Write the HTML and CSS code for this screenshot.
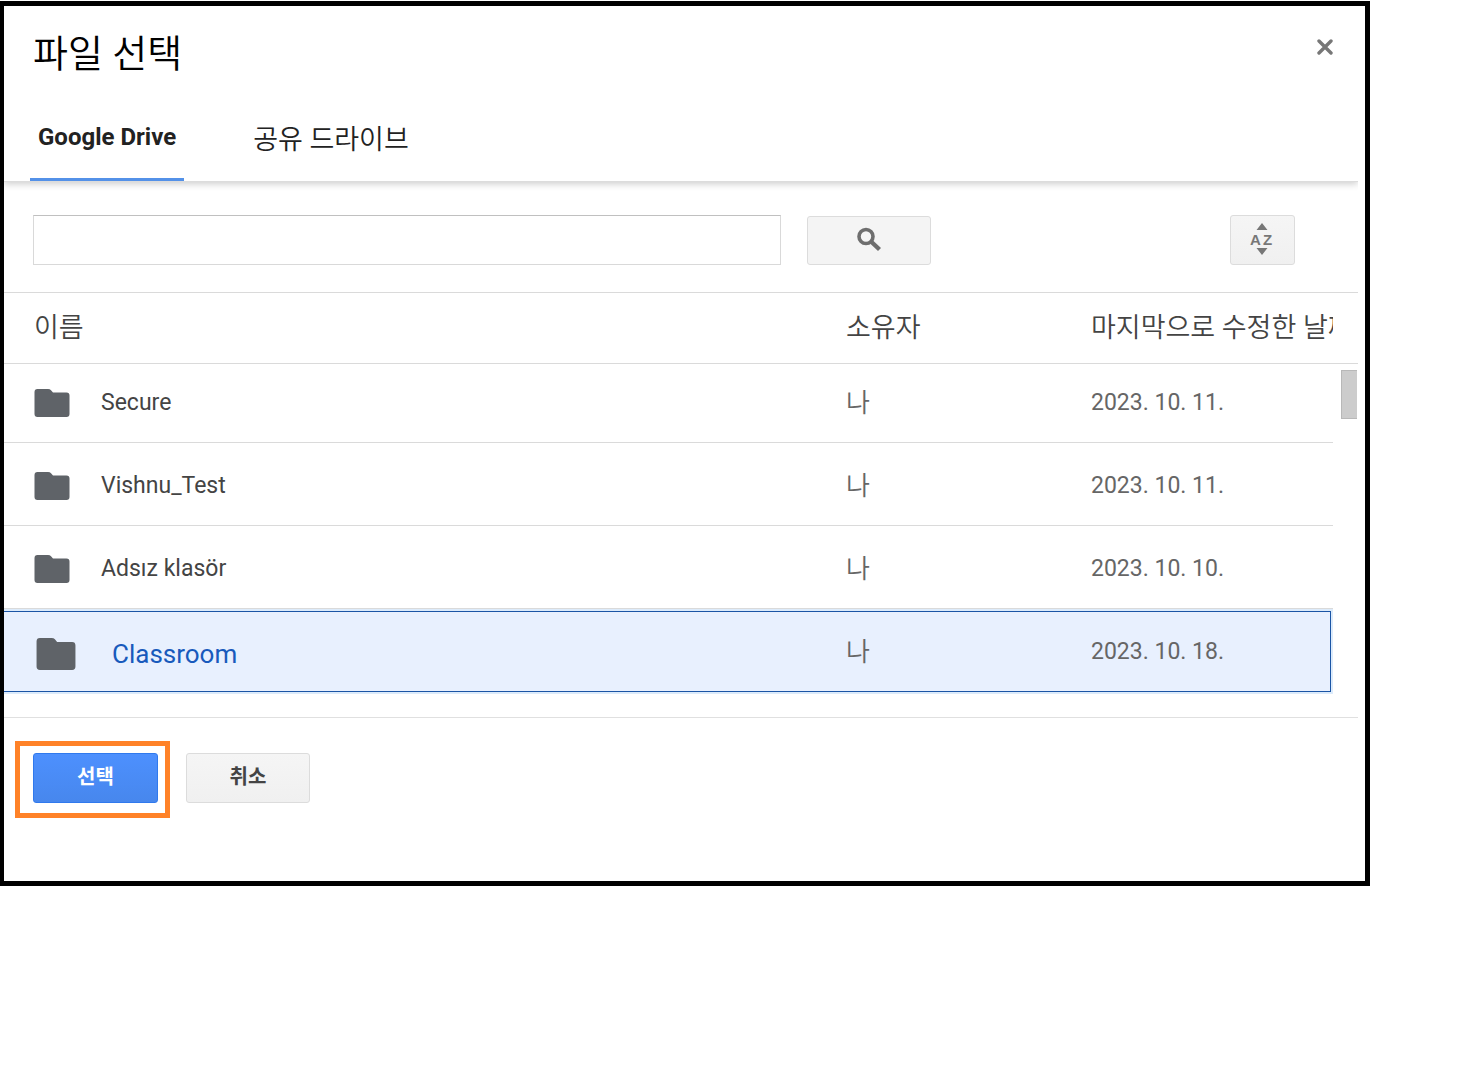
FILE: index.html
```html
<!DOCTYPE html>
<html lang="ko">
<head>
<meta charset="utf-8">
<title>파일 선택</title>
<link rel="stylesheet" href="styles.css">
</head>
<body>
<svg class="defs" aria-hidden="true">
  <symbol id="folder" viewBox="0 0 36 28" preserveAspectRatio="none">
    <path d="M3.500 0H14Q16 0 17 1.200L19 3.500H32.500Q35.500 3.500 35.500 6.500V25Q35.500 28 32.500 28H3.500Q0.500 28 0.500 25V3Q0.500 0 3.500 0Z" fill="#5f6368"/>
  </symbol>
</svg>
<main class="dialog">
  <header class="dialog-header">
    <h1 class="title">파일 선택</h1>
    <button class="close" type="button" aria-label="닫기">
      <svg width="16" height="16" viewBox="0 0 16 16"><path d="M2 2L14 14M14 2L2 14" stroke="#777" stroke-width="3.400" stroke-linecap="round"/></svg>
    </button>
  </header>
  <nav class="tabs">
    <a class="tab tab-active" href="#drive">Google Drive</a>
    <a class="tab" href="#shared">공유 드라이브</a>
  </nav>
  <form class="toolbar">
    <input class="search-input" type="text" aria-label="검색">
    <button class="button search-button" type="button" aria-label="검색">
      <svg width="26" height="26" viewBox="0 0 26 26" fill="none" stroke="#6e6e6e"><circle cx="10" cy="9.500" r="7" stroke-width="3.600"/><path d="M15 14.500L23.500 22.500" stroke-width="4.400"/></svg>
    </button>
    <button class="button sort-button" type="button" aria-label="정렬">
      <svg width="28" height="34" viewBox="0 0 28 34" fill="#777"><path d="M13 2L18.500 9H7.500ZM13 34L18.500 27H7.500Z"/><text class="sort-text" x="1" y="24">A</text><text class="sort-text" x="14" y="24">Z</text></svg>
    </button>
  </form>
  <section class="listing">
    <table class="files">
      <colgroup><col><col class="col-owner"><col class="col-date"><col class="col-scroll"></colgroup>
      <thead>
        <tr><th>이름</th><th>소유자</th><th>마지막으로 수정한 날짜</th><td></td></tr>
      </thead>
      <tbody>
        <tr class="first"><td><div class="name"><svg class="folder"><use href="#folder"/></svg>Secure</div></td><td>나</td><td>2023. 10. 11.</td></tr>
        <tr><td><div class="name"><svg class="folder"><use href="#folder"/></svg>Vishnu_Test</div></td><td>나</td><td>2023. 10. 11.</td></tr>
        <tr><td><div class="name"><svg class="folder"><use href="#folder"/></svg>Adsız klasör</div></td><td>나</td><td>2023. 10. 10.</td></tr>
        <tr class="selected"><td><div class="name"><svg class="folder"><use href="#folder"/></svg>Classroom</div></td><td>나</td><td>2023. 10. 18.</td></tr>
      </tbody>
    </table>
    <div class="scroll-thumb"></div>
  </section>
  <footer class="actions">
    <div class="highlight"><button class="button button-primary" type="button">선택</button></div>
    <button class="button button-cancel" type="button">취소</button>
  </footer>
</main>
</body>
</html>
```
FILE: styles.css
```css
* { box-sizing: border-box; }
body {
  margin: 0;
  padding: 1px 110px 0 0;
  background: #fff;
  color: #444;
  font: 23px/32px Roboto, "Noto Sans CJK KR", sans-serif;
}
.defs { position: absolute; width: 0; height: 0; }
.dialog {
  border: 5px solid #000;
  border-left-width: 4px;
  padding: 0 7px 63px 0;
}
.dialog-header {
  display: flex;
  justify-content: space-between;
  align-items: flex-start;
  padding: 20px 25px 0 29px;
}
.title {
  margin: 0;
  color: #000;
  font-size: 38px;
  font-weight: 350;
  line-height: 56px;
}
.close {
  display: flex;
  margin-top: 13px;
  padding: 0;
  border: 0;
  background: none;
}
.tabs {
  display: flex;
  gap: 61px;
  height: 99px;
  padding-left: 26px;
  box-shadow: 0 1px 0 #dcdcdc, 0 3px 7px rgba(0, 0, 0, 0.2);
  clip-path: inset(0 0 -12px 0);
}
.tab {
  padding: 42px 8px 0;
  color: #222;
  font-size: 27px;
  font-weight: 350;
  text-decoration: none;
}
.tab-active {
  padding-top: 39px;
  border-bottom: 3px solid #5391e8;
  font-size: 24px;
  font-weight: 700;
}
.toolbar {
  display: flex;
  align-items: center;
  padding: 34px 63px 27px 29px;
}
.search-input {
  flex: 0 1 748px;
  min-width: 0;
  height: 50px;
  border: 1px solid #d9d9d9;
  border-top-color: #c0c0c0;
  padding: 0 12px;
  font: inherit;
}
.button {
  display: flex;
  justify-content: center;
  align-items: center;
  width: 124px;
  height: 50px;
  padding: 0 0 4px;
  border: 1px solid #dcdcdc;
  border-radius: 3px;
  background: linear-gradient(#f5f5f5, #f0f0f0);
  color: #444;
  font: 700 20px/32px "Noto Sans CJK KR", sans-serif;
}
.search-button {
  height: 49px;
  margin: 1px 0 0 26px;
  padding: 0 0 1px;
  background: #f4f4f4;
}
.sort-button { width: 65px; margin-left: auto; }
.sort-text { font: 700 15px "Liberation Sans", sans-serif; }
.listing { position: relative; padding-bottom: 23px; }
.files {
  width: 100%;
  border-collapse: separate;
  border-spacing: 0;
  table-layout: fixed;
}
.col-owner { width: 245px; }
.col-date { width: 242px; }
.col-scroll { width: 25px; }
.files th,
.files td {
  padding: 0;
  border-bottom: 1px solid #dadada;
  text-align: left;
  white-space: nowrap;
}
.files thead th,
.files thead td {
  height: 72px;
  border-top: 1px solid #dadada;
  overflow: hidden;
  font-size: 27px;
  font-weight: 350;
}
.files th:first-child,
.files td:first-child { padding-left: 30px; }
.files tbody td { height: 83px; padding-top: 3px; color: #666; }
.files tbody .first td { height: 79px; padding-top: 0; }
.files tbody td:nth-child(2) { font-size: 26px; font-weight: 350; }
.files .name {
  display: flex;
  align-items: center;
  gap: 31px;
  color: #444;
}
.folder { width: 36px; height: 28px; }
.files tbody .selected td {
  height: 85px;
  padding-top: 0;
  border: 0 solid #dcebfb;
  border-width: 2px 0;
  background: #e8f0fe;
  box-shadow: inset 0 1px #1b55a5, inset 0 -1px #1b55a5;
}
.files tbody .selected td:last-child {
  border-right-width: 2px;
  box-shadow: inset 0 1px #1b55a5, inset -1px -1px #1b55a5;
}
.selected .name {
  gap: 36px;
  padding: 5px 0 0 2px;
  color: #185abc;
  font-size: 26px;
}
.selected .folder { width: 40px; height: 32px; }
.scroll-thumb {
  position: absolute;
  top: 78px;
  right: 1px;
  width: 16px;
  height: 49px;
  border: 1px solid #b8b8b8;
  border-right: 0;
  background: #ccc;
}
.actions {
  display: flex;
  align-items: flex-start;
  gap: 16px;
  padding: 23px 11px 0;
  border-top: 1px solid #e0e0e0;
}
.highlight {
  padding: 7px 7px 10px 13px;
  border: 5px solid #ff8228;
}
.button-primary {
  width: 125px;
  border-color: #3079ed;
  background: linear-gradient(#4d90fe, #4787ed);
  color: #fff;
}
.button-cancel { margin-top: 12px; }
```
